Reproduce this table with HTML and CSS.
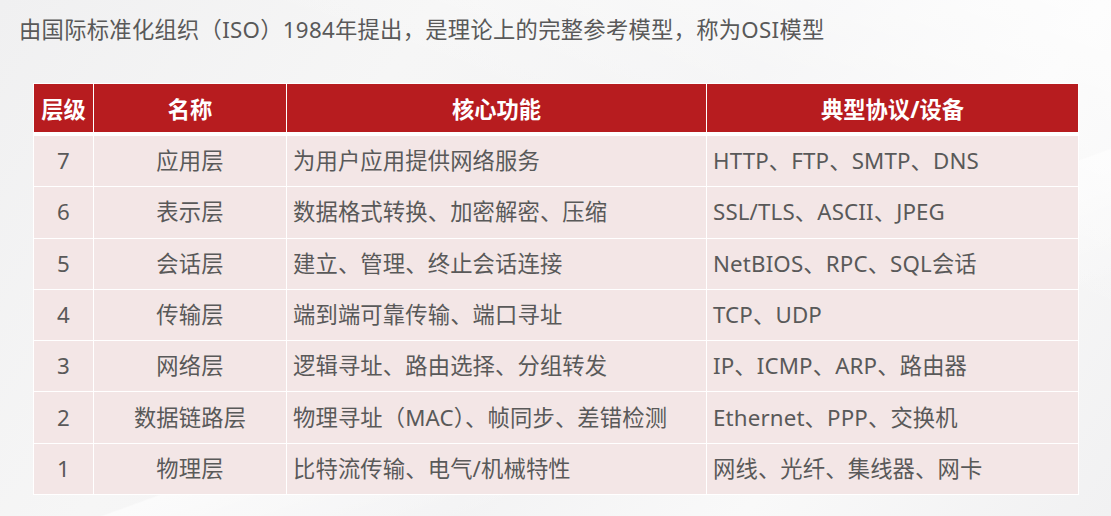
FILE: index.html
```html
<!DOCTYPE html>
<html lang="zh-CN">
<head>
<meta charset="utf-8">
<title>OSI模型</title>
<link rel="stylesheet" href="styles.css">
</head>
<body>
<div class="page">
  <p class="intro">由国际标准化组织（ISO）1984年提出，是理论上的完整参考模型，称为OSI模型</p>
  <table class="osi">
    <colgroup>
      <col class="c1"><col class="c2"><col class="c3"><col class="c4">
    </colgroup>
    <thead>
      <tr><th>层级</th><th>名称</th><th>核心功能</th><th>典型协议/设备</th></tr>
    </thead>
    <tbody>
      <tr><td class="num">7</td><td class="name">应用层</td><td>为用户应用提供网络服务</td><td>HTTP、FTP、SMTP、DNS</td></tr>
      <tr><td class="num">6</td><td class="name">表示层</td><td>数据格式转换、加密解密、压缩</td><td>SSL/TLS、ASCII、JPEG</td></tr>
      <tr><td class="num">5</td><td class="name">会话层</td><td>建立、管理、终止会话连接</td><td>NetBIOS、RPC、SQL会话</td></tr>
      <tr><td class="num">4</td><td class="name">传输层</td><td>端到端可靠传输、端口寻址</td><td>TCP、UDP</td></tr>
      <tr><td class="num">3</td><td class="name">网络层</td><td>逻辑寻址、路由选择、分组转发</td><td>IP、ICMP、ARP、路由器</td></tr>
      <tr><td class="num">2</td><td class="name">数据链路层</td><td>物理寻址（MAC）、帧同步、差错检测</td><td>Ethernet、PPP、交换机</td></tr>
      <tr><td class="num">1</td><td class="name">物理层</td><td>比特流传输、电气/机械特性</td><td>网线、光纤、集线器、网卡</td></tr>
    </tbody>
  </table>
</div>
</body>
</html>
```

FILE: styles.css
```css
html, body {
  margin: 0;
  padding: 0;
}
body {
  width: 1111px;
  height: 516px;
  overflow: hidden;
  font-family: "Noto Sans", "Noto Sans CJK SC", sans-serif;
  color: #595959;
  background:
    linear-gradient(160deg, rgba(255,255,255,0) 60%, rgba(255,255,255,0.6) 60.2%, rgba(255,255,255,0) 75%),
    linear-gradient(200deg, rgba(255,255,255,0.7) 0%, rgba(255,255,255,0) 35%),
    linear-gradient(125deg, #f0f0f1 0%, #f6f6f6 30%, #f3f3f4 55%, #f9f9f9 75%, #f1f1f2 100%);
}
.page {
  padding: 14px 0 0 19px;
}
.intro {
  margin: 0;
  font-size: 22.3px;
  line-height: 32px;
  letter-spacing: 0.28px;
  color: #595959;
  white-space: nowrap;
}
.osi {
  margin: 37px 0 0 14px;
  width: 1045px;
  border-collapse: collapse;
  table-layout: fixed;
  background: #f3e6e6;
  border: 1.5px solid #fff;
}
.c1 { width: 60px; }
.c2 { width: 193px; }
.c3 { width: 420px; }
.c4 { width: 372px; }
.osi th {
  background: #b71c1f;
  color: #fff;
  font-weight: 700;
  font-size: 22.3px;
  height: 48px;
  padding: 0;
  text-align: center;
  border-left: 1.5px solid #fff;
  border-right: 1.5px solid #fff;
  border-bottom: 4px solid #fff;
}
.osi td {
  height: 50.3px;
  padding: 0 0 0 6px;
  font-size: 22.3px;
  line-height: 30px;
  letter-spacing: 0.15px;
  border: 1.5px solid #fff;
  white-space: nowrap;
}
.osi td.num,
.osi td.name {
  text-align: center;
  padding: 0;
}
```
